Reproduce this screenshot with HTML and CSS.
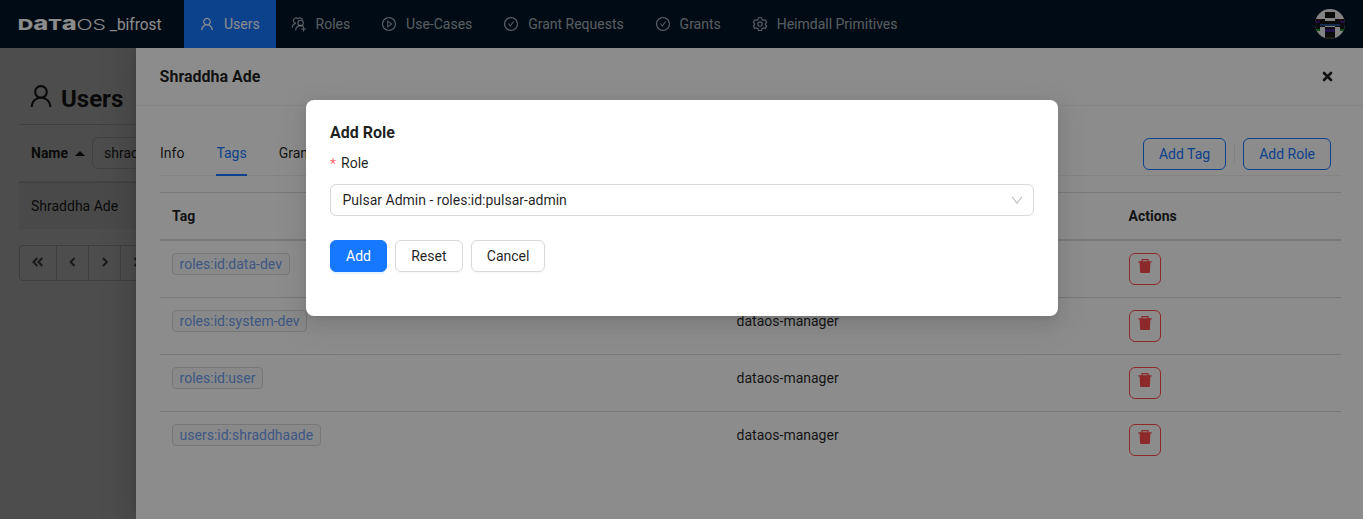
FILE: index.html
```html
<!DOCTYPE html>
<html lang="en">
<head>
<meta charset="utf-8">
<title>DataOS bifrost</title>
<link rel="stylesheet" href="styles.css">
</head>
<body>
<svg class="sprite" aria-hidden="true">
  <symbol id="user" viewBox="0 0 1024 1024"><path d="M858.5 763.6a374 374 0 00-80.6-119.5 375.63 375.63 0 00-119.5-80.6c-.4-.2-.8-.3-1.2-.5C719.5 518 760 444.7 760 362c0-137-111-248-248-248S264 225 264 362c0 82.700 40.500 156 102.800 201.100-.4.2-.8.3-1.200.5-44.800 18.900-85 46-119.500 80.600a375.630 375.630 0 00-80.600 119.500A371.700 371.700 0 00136 901.800a8 8 0 008 8.200h60c4.400 0 7.900-3.500 8-7.800 2-77.200 33-149.500 87.800-204.300 56.700-56.700 132-87.900 212.200-87.900s155.500 31.200 212.200 87.900C779 752.700 810 825 812 902.200c.1 4.400 3.600 7.800 8 7.800h60a8 8 0 008-8.200c-1-47.800-10.900-94.300-29.500-138.200zM512 534c-45.900 0-89.100-17.900-121.600-50.400S340 407.900 340 362c0-45.900 17.900-89.100 50.400-121.600S466.100 190 512 190s89.100 17.900 121.600 50.400S684 316.100 684 362c0 45.900-17.900 89.100-50.400 121.600S557.900 534 512 534z"/></symbol>
  <symbol id="group" viewBox="0 0 16 16"><g fill="none" stroke="currentColor" stroke-width="1.15" stroke-linecap="round"><circle cx="9.600" cy="6.900" r="2.700"/><path d="M4.700 14c.2-2.700 2.100-4.400 4.900-4.400 1 0 1.800.2 2.500.6M6.700 2.600A2.600 2.600 0 1 0 4.900 7.100C2.700 7.700 1.500 9.200 1.300 11.300M7.300 2.300c1.400-.9 3.200-.2 4 1.100M12.600 11v4M10.600 13h4"/></g></symbol>
  <symbol id="play" viewBox="0 0 1024 1024"><path d="M512 64C264.600 64 64 264.600 64 512s200.600 448 448 448 448-200.600 448-448S759.400 64 512 64zm0 820c-205.400 0-372-166.600-372-372s166.600-372 372-372 372 166.600 372 372-166.600 372-372 372z"/><path d="M719.400 499.100l-296.100-215A15.900 15.900 0 00398 297v430c0 13.100 14.800 20.500 25.300 12.900l296.100-215a15.900 15.900 0 000-25.800zm-257.600 134V390.900L628.500 512 461.800 633.100z"/></symbol>
  <symbol id="check" viewBox="0 0 1024 1024"><path d="M699 353h-46.900c-10.200 0-19.900 4.900-25.900 13.300L469 584.300l-71.200-98.800c-6-8.300-15.600-13.300-25.900-13.300H325c-6.500 0-10.300 7.400-6.500 12.700l124.600 172.800a31.800 31.800 0 0051.700 0l210.600-292c3.900-5.300.1-12.700-6.400-12.700z"/><path d="M512 64C264.600 64 64 264.600 64 512s200.600 448 448 448 448-200.600 448-448S759.400 64 512 64zm0 820c-205.400 0-372-166.600-372-372s166.600-372 372-372 372 166.600 372 372-166.600 372-372 372z"/></symbol>
  <symbol id="gear" viewBox="0 0 16 16"><g fill="none" stroke="currentColor" stroke-width="1.150" stroke-linejoin="round"><path d="M6.500 1.700h3l.5 1.900 1.300.8 2-.6 1.400 2.500-1.400 1.300v1l1.400 1.400-1.400 2.400-2-.5-1.300.7-.5 1.900h-3L6 12.600l-1.300-.7-2 .5L1.300 10l1.400-1.400v-1L1.300 6.300l1.400-2.500 2 .6L6 3.600z"/><circle cx="8" cy="8" r="2.200"/></g></symbol>
  <symbol id="trash" viewBox="0 0 14 14"><path d="M.3 2.200h3V1.100C3.300.5 3.700 0 4.400 0h5.200c.7 0 1.100.5 1.100 1.100v1.100h3v1.400h-1.300l-.5 9.400c0 .6-.5 1-1 1H3.100c-.5 0-1-.4-1-1L1.600 3.600H.3zM4.600 1.200v1h4.800v-1z"/></symbol>
</svg>

<header class="topbar">
  <svg class="logo" width="150" height="30" viewBox="0 0 150 30">
    <text class="logo-bold" x="-1.300" y="21" textLength="15.500" lengthAdjust="spacingAndGlyphs">D</text>
    <text class="logo-bold logo-low" x="14.300" y="21" textLength="15" lengthAdjust="spacingAndGlyphs">a</text>
    <text class="logo-bold" x="29" y="21" textLength="14" lengthAdjust="spacingAndGlyphs">T</text>
    <text class="logo-bold logo-low" x="42.800" y="21" textLength="15" lengthAdjust="spacingAndGlyphs">a</text>
    <text class="logo-thin" x="57.500" y="21" textLength="29.500" lengthAdjust="spacingAndGlyphs">OS</text>
    <text class="logo-sub" x="91" y="21" textLength="51.500" lengthAdjust="spacingAndGlyphs">_bifrost</text>
  </svg>
  <nav class="nav">
    <a class="nav-item active"><svg class="icon"><use href="#user"/></svg>Users</a>
    <a class="nav-item"><svg class="icon"><use href="#group"/></svg>Roles</a>
    <a class="nav-item"><svg class="icon"><use href="#play"/></svg>Use-Cases</a>
    <a class="nav-item"><svg class="icon"><use href="#check"/></svg>Grant Requests</a>
    <a class="nav-item"><svg class="icon"><use href="#check"/></svg>Grants</a>
    <a class="nav-item"><svg class="icon"><use href="#gear"/></svg>Heimdall Primitives</a>
  </nav>
  <svg class="avatar" width="30" height="30" viewBox="0 0 30 30">
    <defs><clipPath id="round"><circle cx="15" cy="15" r="15"/></clipPath></defs>
    <g clip-path="url(#round)">
      <path fill="#eee" d="M0 0h30v30H0z"/>
      <path fill="#151515" d="M10 3h10v6H10zM0 10h10v5H0zM20 10h10v5H20zM10 12h10v3H10zM0 15h5v5H0zM25 15h5v5h-5zM5 17h5v1H5zM20 17h5v1h-5zM10 18h10v2H10zM10 23h10v7H10z"/>
      <path fill="#3a1a80" d="M0 12h5v2H0zM25 12h5v2h-5zM10 20h10v3H10z"/>
      <path fill="#284f96" d="M5 15h20v2H5z"/>
      <path fill="#1a8b25" d="M0 20h5v2H0zM25 20h5v2h-5z"/>
      <path fill="#7d1830" d="M3 10h3v1H3zM24 10h3v1h-3z"/>
      <path fill="#3a3527" d="M10 28h10v2H10z"/>
    </g>
  </svg>
</header>

<main class="page">
  <h1 class="page-title"><svg class="title-icon"><use href="#user"/></svg>Users</h1>
  <div class="list">
    <div class="list-head">Name<i class="sort"></i><span class="filter">shrad</span></div>
    <div class="list-row">Shraddha Ade</div>
  </div>
  <div class="pager">
    <span class="page-btn first"><svg width="12" height="10"><path d="M5.300 1 1.500 5l3.800 4M10.300 1 6.500 5l3.800 4"/></svg></span>
    <span class="page-btn"><svg width="12" height="10"><path d="M7.500 1 3.700 5l3.800 4"/></svg></span>
    <span class="page-btn"><svg width="12" height="10"><path d="M4 1l3.800 4L4 9"/></svg></span>
    <span class="page-btn first"><svg width="12" height="10"><path d="M1.500 1l3.800 4-3.800 4M6.500 1l3.800 4-3.800 4"/></svg></span>
  </div>
</main>

<div class="drawer-mask"></div>
<section class="drawer">
  <div class="drawer-head">Shraddha Ade<svg class="close" width="11" height="11"><path d="M2 2l7 7M9 2 2 9"/></svg></div>
  <div class="drawer-body">
    <div class="tabs">
      <span class="tab">Info</span><span class="tab selected">Tags</span><span class="tab">Grants</span>
      <div class="tab-actions"><button class="btn outline">Add Tag</button><i class="divider"></i><button class="btn outline">Add Role</button></div>
    </div>
    <div class="grid grid-head"><b>Tag</b><b></b><b>Actions</b></div>
    <div class="grid"><div><span class="tag">roles:id:data-dev</span></div><span>dataos-manager</span><button class="delete"><svg><use href="#trash"/></svg></button></div>
    <div class="grid"><div><span class="tag">roles:id:system-dev</span></div><span>dataos-manager</span><button class="delete"><svg><use href="#trash"/></svg></button></div>
    <div class="grid"><div><span class="tag">roles:id:user</span></div><span>dataos-manager</span><button class="delete"><svg><use href="#trash"/></svg></button></div>
    <div class="grid last"><div><span class="tag">users:id:shraddhaade</span></div><span>dataos-manager</span><button class="delete"><svg><use href="#trash"/></svg></button></div>
  </div>
</section>

<div class="modal-mask">
  <section class="modal">
    <h2 class="modal-title">Add Role</h2>
    <label class="label"><span class="star">*</span>Role</label>
    <div class="select">Pulsar Admin - roles:id:pulsar-admin<svg width="12" height="10"><path d="M1 1.500 6 8.300l5-6.800"/></svg></div>
    <div class="actions"><button class="btn primary">Add</button><button class="btn">Reset</button><button class="btn">Cancel</button></div>
  </section>
</div>
</body>
</html>
```
FILE: styles.css
```css
* { box-sizing: border-box; }
body {
  margin: 0;
  height: 519px;
  overflow: hidden;
  background: #fff;
  color: rgba(0, 0, 0, .88);
  font: 14px/22px Roboto, "Liberation Sans", sans-serif;
}
h1, h2 { margin: 0; }
svg { fill: currentColor; flex: none; }
button { font: inherit; }
.sprite { position: absolute; width: 0; height: 0; }

.topbar {
  position: relative;
  z-index: 3;
  display: flex;
  align-items: center;
  height: 48px;
  padding: 0 18px 0 19px;
  background: #001529;
  color: #fff;
}
.logo { width: 150px; margin-right: 15px; overflow: visible; }
.logo-bold { font: 800 15px Inter, sans-serif; }
.logo-low { font-size: 19px; }
.logo-thin { font: 300 15px Inter, sans-serif; }
.logo-sub { font: 400 16px Roboto, sans-serif; }
.nav { display: flex; flex: 1; }
.nav-item {
  display: flex;
  align-items: center;
  gap: 9px;
  height: 48px;
  padding: 0 16px 0 15px;
  color: rgba(255, 255, 255, .65);
}
.nav-item + .nav-item { margin-left: -.15px; }
.nav-item.active { background: #1677ff; color: #fff; }
.icon { width: 16px; height: 16px; }

.page { height: 471px; padding: 34px 19px 0; }
.page-title {
  display: flex;
  gap: 6px;
  height: 43px;
  padding-left: 8px;
  border-bottom: 1px solid #d9d9d9;
  font-size: 24px;
  line-height: 34px;
}
.title-icon { width: 28px; height: 28px; }
.list-head {
  display: flex;
  align-items: center;
  height: 58px;
  padding-left: 12px;
  border-bottom: 2px solid #dbdbdb;
  font-weight: 700;
}
.sort {
  margin: 0 7px 0 7px;
  border: 5px solid transparent;
  border-top: 0;
  border-bottom-color: #222;
}
.filter {
  width: 180px;
  height: 32px;
  padding: 4px 11px;
  border: 1px solid #d9d9d9;
  border-radius: 6px;
  font-weight: 400;
}
.list-row { height: 46px; padding: 12px; background: #f5f5f5; }
.pager { display: flex; margin-top: 16px; }
.page-btn {
  display: flex;
  align-items: center;
  justify-content: center;
  width: 33px;
  height: 36px;
  margin-right: -1px;
  border: 1px solid #d0d0d0;
}
.page-btn.first { width: 38px; }
.page-btn:first-child { border-radius: 4px 0 0 4px; }
.page-btn svg { margin-bottom: 2px; }
.page-btn path { fill: none; stroke: #555; stroke-width: 2; }

.drawer-mask {
  position: absolute;
  z-index: 1;
  inset: 0;
  background: rgba(0, 0, 0, .45);
}
.drawer {
  position: absolute;
  z-index: 2;
  inset: 48px 0 0 136px;
  background: #fff;
  box-shadow: -6px 0 16px rgba(0, 0, 0, .08), -3px 0 6px -4px rgba(0, 0, 0, .12), -9px 0 28px 8px rgba(0, 0, 0, .05);
}
.drawer-head {
  display: flex;
  align-items: center;
  justify-content: space-between;
  height: 58px;
  padding: 0 30px 0 23.600px;
  border-bottom: 1px solid #f0f0f0;
  font-size: 16px;
  font-weight: 700;
}
.close path { fill: none; stroke: #222; stroke-width: 2.600; stroke-linecap: round; }
.drawer-body { padding: 24px 22px 0 24px; }
.tabs {
  display: flex;
  align-items: center;
  gap: 32px;
  height: 46px;
  margin-bottom: 16px;
  border-bottom: 1px solid #f0f0f0;
}
.tab { height: 46px; padding-top: 12px; }
.tab.selected { color: #1677ff; border-bottom: 2px solid #1677ff; }
.tab-actions { display: flex; align-items: center; margin: 3px 10px 0 auto; }
.divider { width: 1px; height: 20px; margin: 0 8px; background: #eee; }
.btn {
  height: 32px;
  padding: 4px 15px;
  border: 1px solid #d9d9d9;
  border-radius: 6px;
  background: #fff;
  color: rgba(0, 0, 0, .88);
  line-height: 22px;
  box-shadow: 0 2px 0 rgba(0, 0, 0, .02);
}
.outline { border-color: #1677ff; color: #1677ff; box-shadow: none; }
.primary { border-color: #1677ff; background: #1677ff; color: #fff; box-shadow: 0 2px 0 rgba(5, 145, 255, .1); }
.grid {
  display: grid;
  grid-template-columns: 564.600px 392px 1fr;
  align-items: start;
  height: 57px;
  padding: 12px 12px 0;
  border-bottom: 1px solid #dbdbdb;
}
.grid-head { height: 49px; border-top: 1px solid #dbdbdb; border-bottom-width: 2px; }
.last { border: 0; }
.tag {
  display: inline-block;
  height: 22px;
  padding: 0 6.600px;
  border: 1px solid #d9d9d9;
  border-radius: 4px;
  background: #fafafa;
  color: #6f9ff0;
  line-height: 20px;
}
.delete {
  display: flex;
  justify-content: center;
  width: 32px;
  height: 32px;
  padding: 5px 0 0;
  border: 1px solid #ff4d4f;
  border-radius: 6px;
  background: transparent;
  color: #ff4d4f;
}
.delete svg { width: 14px; height: 14px; }

.modal-mask {
  position: absolute;
  z-index: 4;
  inset: 0;
  padding-top: 100px;
  background: rgba(0, 0, 0, .45);
}
.modal {
  width: 752px;
  height: 216px;
  margin-left: 306px;
  padding: 21px 24px 20px;
  border-radius: 8px;
  background: #fff;
  box-shadow: 0 6px 16px rgba(0, 0, 0, .08), 0 3px 6px -4px rgba(0, 0, 0, .12), 0 9px 28px 8px rgba(0, 0, 0, .05);
}
.modal-title { font-size: 16px; font-weight: 700; line-height: 24px; }
.label { display: flex; gap: 5px; height: 39px; padding-top: 7px; }
.star { color: #ff7375; font-size: 14px; padding-top: 1px; }
.select {
  display: flex;
  align-items: center;
  justify-content: space-between;
  height: 32px;
  padding: 0 10px 0 11.500px;
  border: 1px solid #d9d9d9;
  border-radius: 6px;
}
.select path { fill: none; stroke: #bfbfbf; stroke-width: 1.200; }
.actions { display: flex; gap: 8.300px; margin-top: 24px; }
```
